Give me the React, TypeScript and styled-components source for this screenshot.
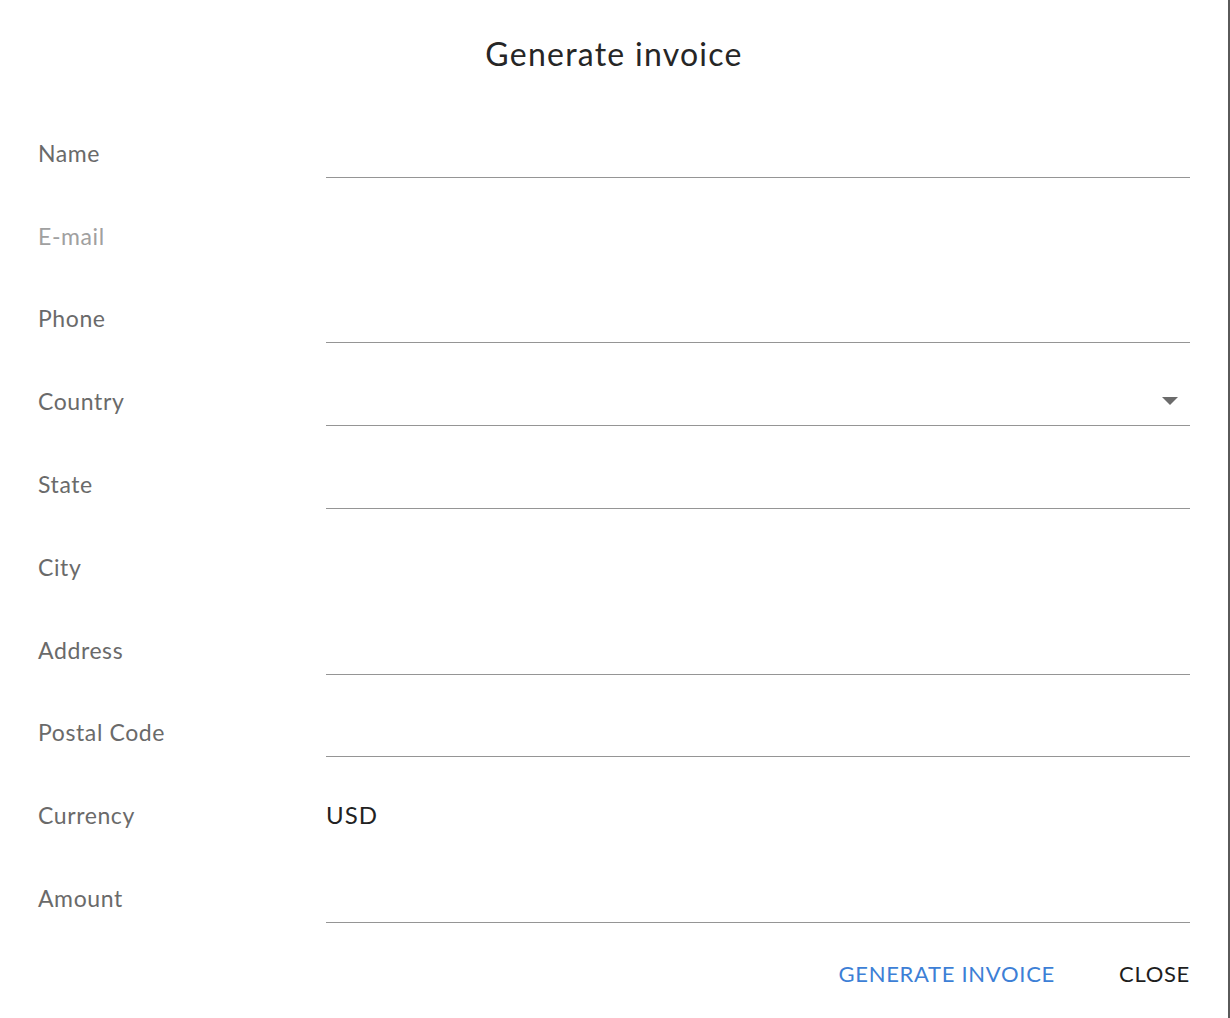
import React from "react";
import styled, { createGlobalStyle } from "styled-components";

const Global = createGlobalStyle`
  html, body { margin: 0; padding: 0; background: #ffffff; }
  body { font-family: "Lato", "Open Sans", sans-serif; }
`;

const Dialog = styled.div`
  box-sizing: border-box;
  width: 1230px;
  height: 1018px;
  background: #fff;
  border-right: 2px solid #5a5a5a;
  display: flex;
  flex-direction: column;
`;

const Title = styled.h1`
  margin: 0;
  padding-top: 34px;
  height: 95px;
  box-sizing: border-box;
  text-align: center;
  font-family: "Lato", sans-serif;
  font-weight: 400;
  font-size: 32px;
  line-height: 40px;
  letter-spacing: 1.25px;
  color: #262626;
`;

const Form = styled.div`
  display: flex;
  flex-direction: column;
  padding: 0 38px 0 38px;
`;

const Row = styled.div`
  display: grid;
  grid-template-columns: 288px 1fr;
  height: 82.8px;
  align-items: end;
`;

const Label = styled.label<{ $disabled?: boolean }>`
  font-family: "Lato", sans-serif;
  font-size: 23px;
  line-height: 26px;
  letter-spacing: 0.6px;
  padding-bottom: 12px;
  color: ${(p) => (p.$disabled ? "#a0a0a0" : "#6a6a6a")};
`;

const Field = styled.div<{ $line: boolean }>`
  position: relative;
  height: 46px;
  box-sizing: border-box;
  border-bottom: 1.5px solid ${(p) => (p.$line ? "#959595" : "transparent")};
  display: flex;
  align-items: flex-end;
`;

const Value = styled.span`
  font-family: "Lato", sans-serif;
  font-size: 24px;
  line-height: 28px;
  letter-spacing: 1px;
  color: #222;
  padding-bottom: 10px;
`;

const Caret = styled.span`
  position: absolute;
  right: 12px;
  bottom: 20px;
  width: 0;
  height: 0;
  border-left: 8px solid transparent;
  border-right: 8px solid transparent;
  border-top: 8px solid #6b6b6b;
`;

const Actions = styled.div`
  display: flex;
  justify-content: flex-end;
  gap: 64px;
  padding: 37px 38px 0 0;
`;

const Button = styled.button<{ $primary?: boolean }>`
  background: none;
  border: none;
  padding: 0;
  font-family: "Lato", sans-serif;
  font-size: 22px;
  line-height: 28px;
  letter-spacing: 0.7px;
  text-transform: uppercase;
  color: ${(p) => (p.$primary ? "#3d7fd6" : "#1e1e1e")};
  cursor: pointer;
`;

type F = { label: string; line: boolean; disabled?: boolean; value?: string; select?: boolean };

const fields: F[] = [
  { label: "Name", line: true },
  { label: "E-mail", line: false, disabled: true },
  { label: "Phone", line: true },
  { label: "Country", line: true, select: true },
  { label: "State", line: true },
  { label: "City", line: false },
  { label: "Address", line: true },
  { label: "Postal Code", line: true },
  { label: "Currency", line: false, value: "USD" },
  { label: "Amount", line: true },
];

export default function App() {
  return (
    <>
      <Global />
      <Dialog>
        <Title>Generate invoice</Title>
        <Form>
          {fields.map((f) => (
            <Row key={f.label}>
              <Label $disabled={f.disabled}>{f.label}</Label>
              <Field $line={f.line}>
                {f.value && <Value>{f.value}</Value>}
                {f.select && <Caret />}
              </Field>
            </Row>
          ))}
        </Form>
        <Actions>
          <Button $primary>Generate invoice</Button>
          <Button>Close</Button>
        </Actions>
      </Dialog>
    </>
  );
}
